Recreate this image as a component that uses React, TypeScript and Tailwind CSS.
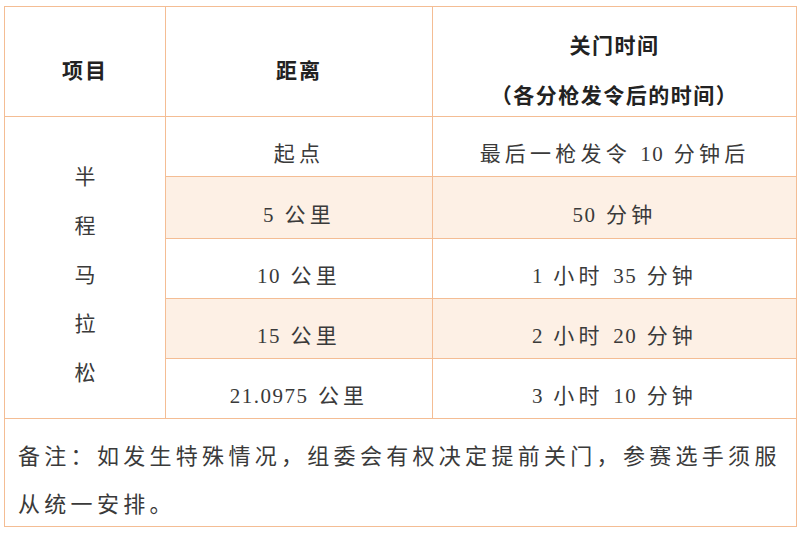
import React from "react";

const font = "font-['Liberation_Serif','Noto_Sans_CJK_SC',serif]";
const bd = "border border-[#f4bd94]";

function Txt({ s }: { s: string }) {
  const parts = s.split(/([0-9.]+)/);
  return (
    <>
      {parts.map((p, i) =>
        /^[0-9.]+$/.test(p) ? (
          <span key={i} className="tracking-[1.5px]">{p}</span>
        ) : (
          <span key={i}>{p}</span>
        )
      )}
    </>
  );
}

function Cell({ children, shaded }: { children: string; shaded?: boolean }) {
  return (
    <td className={`${bd} ${shaded ? "bg-[#fdf0e5]" : ""} p-0 text-center align-middle`}>
      <div className="pt-[14px] text-[21px] leading-[24px] tracking-[4.2px] text-[#3a3a3a]">
        <Txt s={children} />
      </div>
    </td>
  );
}

export default function App() {
  const rows: { d: string; t: string; h: string; s?: boolean }[] = [
    { d: "起点", t: "最后一枪发令 10 分钟后", h: "h-[60px]" },
    { d: "5 公里", t: "50 分钟", h: "h-[62px]", s: true },
    { d: "10 公里", t: "1 小时 35 分钟", h: "h-[60px]" },
    { d: "15 公里", t: "2 小时 20 分钟", h: "h-[60px]", s: true },
    { d: "21.0975 公里", t: "3 小时 10 分钟", h: "h-[60px]" },
  ];
  return (
    <div className={`w-[800px] h-[535px] bg-white pl-[4px] pt-[6px] ${font}`}>
      <table className="border-collapse table-fixed w-[792px]">
        <colgroup>
          <col className="w-[161px]" />
          <col className="w-[267px]" />
          <col className="w-[364px]" />
        </colgroup>
        <tbody>
          <tr className="h-[110px]">
            <td className={`${bd} p-0 text-center align-middle`}>
              <div className="pt-[18px] text-[21px] leading-[24px] tracking-[2px] font-bold text-[#222]">项目</div>
            </td>
            <td className={`${bd} p-0 text-center align-middle`}>
              <div className="pt-[18px] text-[21px] leading-[24px] tracking-[2px] font-bold text-[#222]">距离</div>
            </td>
            <td className={`${bd} p-0 text-center align-middle`}>
              <div className="pt-[18px] flex flex-col gap-[26px] text-[21px] leading-[24px] tracking-[1.5px] font-bold text-[#222]">
                <div>关门时间</div>
                <div>（各分枪发令后的时间）</div>
              </div>
            </td>
          </tr>
          {rows.map((r, i) => (
            <tr key={i} className={r.h}>
              {i === 0 && (
                <td rowSpan={5} className={`${bd} p-0 text-center align-middle`}>
                  <div className="pt-[16px] text-[21px] leading-[49px] text-[#3a3a3a] flex flex-col items-center">
                    {"半程马拉松".split("").map((c) => (
                      <span key={c}>{c}</span>
                    ))}
                  </div>
                </td>
              )}
              <Cell shaded={r.s}>{r.d}</Cell>
              <Cell shaded={r.s}>{r.t}</Cell>
            </tr>
          ))}
          <tr className="h-[108px]">
            <td colSpan={3} className={`${bd} p-0 align-top`}>
              <div className="h-[106px] pl-[13px] pr-[4px] pt-[14px] text-[22px] leading-[48px] tracking-[4.3px] text-[#3a3a3a]">
                备注：如发生特殊情况，组委会有权决定提前关门，参赛选手须服从统一安排。
              </div>
            </td>
          </tr>
        </tbody>
      </table>
    </div>
  );
}
